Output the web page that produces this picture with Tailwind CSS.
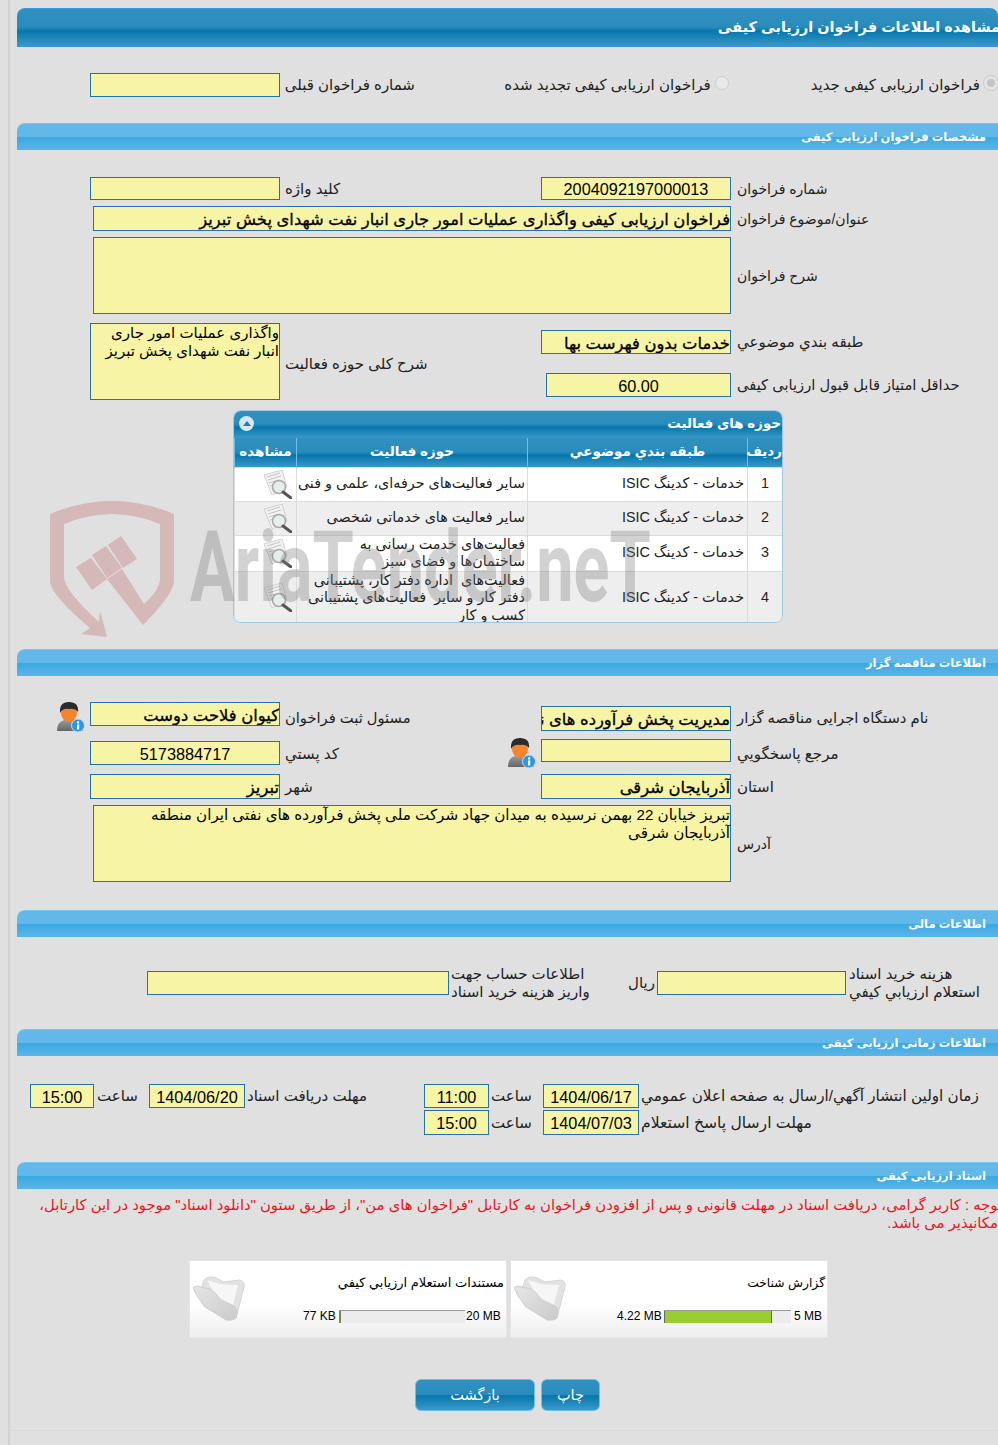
<!DOCTYPE html>
<html lang="fa">
<head>
<meta charset="utf-8">
<script src="https://cdn.jsdelivr.net/npm/@tailwindcss/browser@4"></script>
<title>مشاهده اطلاعات فراخوان ارزیابی کیفی</title>
</head>
<body class="m-0">
<div class="relative w-[998px] h-[1445px] overflow-hidden text-[15px] leading-[18px] text-[#222] font-['Liberation_Sans','DejaVu_Sans',sans-serif] bg-[linear-gradient(90deg,#e0e0e0_8px,#d3d3d3_8px,#d3d3d3_10px,#e0e0e0_10px)]">

<svg width="0" height="0" class="absolute"><defs>
  <linearGradient id="fold" x1="0" y1="0" x2="1" y2="1"><stop offset="0" stop-color="#e6e6e6"/><stop offset="1" stop-color="#cacaca"/></linearGradient>
  <linearGradient id="suit" x1="0" y1="0" x2="0" y2="1"><stop offset="0" stop-color="#9a9a9a"/><stop offset="1" stop-color="#666"/></linearGradient>
  <symbol id="folder" viewBox="0 0 52 46">
    <path d="M11 5 Q16 0 23 3 L31 7 L47 5 Q52 6 51 12 L43 43 L8 14Z" fill="#e2e2e2" stroke="#d4d4d4"/>
    <path d="M14 5 L27 9 L45 10 L40 30 L22 20Z" fill="#f6f6f6"/>
    <path d="M0 13 Q2 10 8 12 L17 14 Q23 17 28 26 L39 30 Q44 32 44 38 L43 43 Q40 46 33 45 Q22 38 12 32 Q4 22 0 13Z" fill="url(#fold)" stroke="#cdcdcd"/>
  </symbol>
  <symbol id="doc" viewBox="9 3 28 29">
    <path d="M9 8 27 3 32 20 17 28Z" fill="#f2f2f2" stroke="#cfcfcf"/>
    <path d="M12 10 25 6M13 13 26 9M14 16 20 14M15 19 19 18" stroke="#c4c4c4"/>
    <circle cx="24" cy="20" r="6.5" fill="#e4ecec" fill-opacity=".9" stroke="#a8a8a8" stroke-width="1.5"/>
    <path d="M28 25 36 31" stroke="#555" stroke-width="3" stroke-linecap="round"/>
  </symbol>
  <symbol id="user" viewBox="0 0 28 31">
    <path d="M0 29 Q0 20 7 18 H18 Q25 20 26 29Z" fill="url(#suit)"/>
    <ellipse cx="12" cy="11" rx="8" ry="9" fill="#f4852f"/>
    <path d="M3 11 Q2 0 12 0 Q22 0 21 10 Q18 6 12 7 Q6 6 3 11Z" fill="#2b2b2b"/>
    <circle cx="21" cy="23.500" r="6.500" fill="#2f97df" stroke="#bfe0f5"/>
    <rect x="20" y="22.500" width="2.200" height="5" fill="#fff"/>
    <rect x="20" y="19.300" width="2.200" height="2.200" fill="#fff"/>
  </symbol>
</defs></svg>

<!-- watermark -->
<svg class="absolute left-[50px] top-[500px] z-10 pointer-events-none" width="126" height="138" viewBox="50 500 126 138">
  <g fill="#c98f8f" fill-opacity=".5">
    <path d="M50 514 Q112 488 174 514 V583 Q170 598 143 625 L107 579 L122 569 L144 604 Q160 590 160 578 V524 Q112 504 64 524 V578 Q66 592 99 622 L100 611 L107 637 L81 634 L90 628 Q52 596 50 582 Z"/>
    <path d="M76 567 91 558 107 579 92 590Z"/>
    <path d="M92 555 106 546 122 568 107 578Z"/>
    <path d="M108 545 121 536 137 559 123 568Z"/>
  </g>
</svg>
<div class="absolute left-[190px] top-[513px] z-10 pointer-events-none origin-left scale-x-[.68] whitespace-nowrap text-[98px] leading-[110px] font-bold text-[#7d7d7d]/35 font-['Roboto',sans-serif]" dir="ltr">AriaTender.neT</div>

<!-- page title -->
<div class="mt-0 pt-[8px]">
  <div class="ml-[17px] h-[39px] pb-[2px] rounded-t-lg border-y border-[#3a95d8] bg-[linear-gradient(#3091c0_0,#2a8cbc_48%,#0677ad_60%,#3a98c8_100%)] flex justify-end items-center">
    <span dir="rtl" class="mr-[-2px] whitespace-nowrap text-[14.4px] font-bold text-white">مشاهده اطلاعات فراخوان ارزیابی کیفی</span>
  </div>
</div>

<!-- type row -->
<div class="mt-[26px] h-[24px] flex items-center">
  <div class="ml-[90px] w-[190px] h-[24px] border border-[#1f74ad] bg-[#f7f5a5]"></div>
  <span dir="rtl" class="ml-[5px] w-[220px] text-left">شماره فراخوان قبلی</span>
  <span dir="rtl" class="w-[207px] text-left whitespace-nowrap">فراخوان ارزیابی کیفی تجدید شده</span>
  <span class="ml-[4px] w-[14px] h-[14px] rounded-full border border-[#ccc] bg-[#e9e9e9] -translate-y-[2px]"></span>
  <span dir="rtl" class="ml-[84px] w-[167px] text-left whitespace-nowrap">فراخوان ارزیابی کیفی جدید</span>
  <span class="ml-[4px] shrink-0 w-[14px] h-[14px] rounded-full border-[3px] border-[#e4e4e4] bg-[#c4c4c4] outline outline-[#ccc] -translate-y-[2px]"></span>
</div>

<!-- section: spec -->
<div class="mt-[26px] ml-[17px] h-[27px] rounded-tl-lg border-t border-[#79c4ee] bg-[linear-gradient(#62b8e8_0,#62b8e8_48%,#3ba9e2_52%,#5ab5e8_100%)] flex justify-end items-center pr-[12px]">
  <span dir="rtl" class="text-[11.5px] font-bold text-white whitespace-nowrap">مشخصات فراخوان ارزیابی کیفی</span>
</div>

<div class="mt-[27px] h-[23px] flex items-center">
  <div class="ml-[90px] w-[190px] h-[23px] border border-[#1f74ad] bg-[#f7f5a5]"></div>
  <span dir="rtl" class="ml-[5px] w-[256px] text-left">کلید واژه</span>
  <div class="w-[190px] h-[23px] border border-[#1f74ad] bg-[#f7f5a5] text-center text-[16.3px] leading-[23px] text-black">2004092197000013</div>
  <span dir="rtl" class="ml-[6px] text-[14px]">شماره فراخوان</span>
</div>
<div class="mt-[6px] h-[25px] flex items-center">
  <div dir="rtl" class="ml-[93px] w-[638px] h-[25px] border border-[#1f74ad] bg-[#f7f5a5] text-[16.4px] leading-[25px] [-webkit-text-stroke:0.3px_black] text-black whitespace-nowrap overflow-hidden">فراخوان ارزیابی کیفی واگذاری عملیات امور جاری انبار نفت شهدای پخش تبریز</div>
  <span dir="rtl" class="ml-[6px] text-[14px]">عنوان/موضوع فراخوان</span>
</div>
<div class="mt-[6px] h-[77px] flex items-center">
  <div class="ml-[93px] w-[638px] h-[77px] border border-[#1f74ad] bg-[#f7f5a5]"></div>
  <span dir="rtl" class="ml-[6px] text-[14px]">شرح فراخوان</span>
</div>
<div class="mt-[9px] h-[77px] flex items-start">
  <div dir="rtl" class="ml-[90px] w-[190px] h-[77px] border border-[#1f74ad] bg-[#f7f5a5] text-[15px] text-black">واگذاری عملیات امور جاری<br>انبار نفت شهدای پخش تبریز</div>
  <span dir="rtl" class="ml-[5px] w-[256px] mt-[32px] text-left">شرح کلی حوزه فعالیت</span>
  <div class="flex flex-col">
    <div class="mt-[7px] h-[24px] flex items-center">
      <div dir="rtl" class="w-[190px] h-[24px] border border-[#1f74ad] bg-[#f7f5a5] text-[16.4px] leading-[24px] [-webkit-text-stroke:0.3px_black] text-black whitespace-nowrap overflow-hidden">خدمات بدون فهرست بها</div>
      <span dir="rtl" class="ml-[6px] whitespace-nowrap">طبقه بندي موضوعي</span>
    </div>
    <div class="mt-[19px] h-[24px] flex items-center">
      <div class="ml-[5px] w-[185px] h-[24px] border border-[#1f74ad] bg-[#f7f5a5] text-center text-[16.3px] leading-[24px] text-black">60.00</div>
      <span dir="rtl" class="ml-[6px] whitespace-nowrap text-[14.7px]">حداقل امتیاز قابل قبول ارزیابی کیفی</span>
    </div>
  </div>
</div>

<!-- activities table -->
<div class="mt-[10px] ml-[233px] w-[550px] h-[213px] rounded-lg border border-[#9cc9e6] overflow-hidden bg-white">
  <div dir="rtl" class="h-[27px] pb-[2px] flex items-center justify-between pr-[1px] pl-[5px] bg-[linear-gradient(#3091c0_0,#2a8cbc_48%,#0677ad_60%,#3a98c8_100%)] text-white font-bold text-[13.4px]">
    <span>حوزه های فعالیت</span>
    <span class="w-[15px] h-[15px] rounded-full bg-[#d6e6f2] flex items-center justify-center"><span class="w-0 h-0 border-x-[4px] border-x-transparent border-b-[5px] border-b-[#1f7fb3]"></span></span>
  </div>
  <table dir="rtl" class="w-[548px] table-fixed border-collapse text-[14.35px] leading-[17.5px]">
    <colgroup><col class="w-[35px]"><col class="w-[220px]"><col class="w-[231px]"><col class="w-[62px]"></colgroup>
    <thead>
      <tr class="h-[29px] text-white font-bold text-[13.5px] bg-[linear-gradient(#3091c0_0,#2a8cbc_48%,#0677ad_60%,#3a98c8_100%)]">
        <th class="p-0 pb-[2px] border-x border-[#6cc0ea] font-bold">ردیف</th>
        <th class="p-0 pb-[2px] border-x border-[#6cc0ea] font-bold">طبقه بندي موضوعي</th>
        <th class="p-0 pb-[2px] border-x border-[#6cc0ea] font-bold">حوزه فعالیت</th>
        <th class="p-0 pb-[2px] border-x border-[#6cc0ea] font-bold">مشاهده</th>
      </tr>
    </thead>
    <tbody>
      <tr class="h-[34px] bg-white border-t border-[#6cc0ea]">
        <td class="p-0 border border-[#dcdcdc] text-center">1</td>
        <td class="py-0 px-[3px] border border-[#dcdcdc]">خدمات - کدینگ ISIC</td>
        <td class="py-0 pr-[2px] pl-0 border border-[#dcdcdc] whitespace-nowrap">سایر فعالیت‌های حرفه‌ای، علمی و فنی</td>
        <td class="p-0 border border-[#dcdcdc]"><svg width="28" height="29" class="mr-[4px]"><use href="#doc"/></svg></td>
      </tr>
      <tr class="h-[34px] bg-[#eeeeee]">
        <td class="p-0 border border-[#dcdcdc] text-center">2</td>
        <td class="py-0 px-[3px] border border-[#dcdcdc]">خدمات - کدینگ ISIC</td>
        <td class="py-0 pr-[2px] pl-0 border border-[#dcdcdc] whitespace-nowrap">سایر فعالیت های خدماتی شخصی</td>
        <td class="p-0 border border-[#dcdcdc]"><svg width="28" height="29" class="mr-[4px]"><use href="#doc"/></svg></td>
      </tr>
      <tr class="h-[35px] bg-white">
        <td class="p-0 border border-[#dcdcdc] text-center">3</td>
        <td class="py-0 px-[3px] border border-[#dcdcdc]">خدمات - کدینگ ISIC</td>
        <td class="py-0 pr-[2px] pl-0 border border-[#dcdcdc] whitespace-nowrap">فعالیت‌های خدمت رسانی به<br>ساختمان‌ها و فضای سبز</td>
        <td class="p-0 border border-[#dcdcdc]"><svg width="28" height="29" class="mr-[4px]"><use href="#doc"/></svg></td>
      </tr>
      <tr class="h-[52px] bg-[#eeeeee]">
        <td class="p-0 border border-[#dcdcdc] text-center">4</td>
        <td class="py-0 px-[3px] border border-[#dcdcdc]">خدمات - کدینگ ISIC</td>
        <td class="py-0 pr-[2px] pl-0 border border-[#dcdcdc] whitespace-nowrap">فعالیت‌های&nbsp; اداره دفتر کار، پشتیبانی<br>دفتر کار و سایر&nbsp; فعالیت‌های پشتیبانی<br>کسب و کار</td>
        <td class="p-0 border border-[#dcdcdc]"><svg width="28" height="29" class="mr-[4px]"><use href="#doc"/></svg></td>
      </tr>
    </tbody>
  </table>
</div>

<!-- section: organiser -->
<div class="mt-[26px] ml-[17px] h-[27px] rounded-tl-lg border-t border-[#79c4ee] bg-[linear-gradient(#62b8e8_0,#62b8e8_48%,#3ba9e2_52%,#5ab5e8_100%)] flex justify-end items-center pr-[12px]">
  <span dir="rtl" class="text-[11.5px] font-bold text-white whitespace-nowrap">اطلاعات مناقصه گزار</span>
</div>

<div class="mt-[26px] h-[29px] flex items-start">
  <svg class="ml-[57px] mr-[5px] shrink-0" width="28" height="31"><use href="#user"/></svg>
  <div dir="rtl" class="w-[190px] h-[24px] border border-[#1f74ad] bg-[#f7f5a5] text-[16.4px] leading-[24px] [-webkit-text-stroke:0.3px_black] text-black whitespace-nowrap overflow-hidden">کیوان فلاحت دوست</div>
  <span dir="rtl" class="ml-[5px] w-[256px] mt-[7px] text-left text-[14.7px]">مسئول ثبت فراخوان</span>
  <div dir="rtl" class="mt-[4px] w-[190px] h-[25px] border border-[#1f74ad] bg-[#f7f5a5] text-[16.4px] leading-[25px] [-webkit-text-stroke:0.3px_black] text-black whitespace-nowrap overflow-hidden">مدیریت پخش فرآورده های نفتی آذربایجان شرقی</div>
  <span dir="rtl" class="ml-[6px] mt-[7px] whitespace-nowrap text-[14.8px]">نام دستگاه اجرایی مناقصه گزار</span>
</div>
<div class="mt-[7px] h-[30px] flex items-start">
  <div class="ml-[90px] mt-[3px] w-[190px] h-[24px] border border-[#1f74ad] bg-[#f7f5a5] text-center text-[16.3px] leading-[24px] text-black">5173884717</div>
  <span dir="rtl" class="ml-[5px] w-[223px] mt-[7px] text-left">کد پستي</span>
  <svg class="shrink-0" width="28" height="31"><use href="#user"/></svg>
  <div class="ml-[5px] mt-[1px] w-[190px] h-[23px] border border-[#1f74ad] bg-[#f7f5a5]"></div>
  <span dir="rtl" class="ml-[6px] mt-[7px] whitespace-nowrap">مرجع پاسخگويي</span>
</div>
<div class="mt-[6px] h-[25px] flex items-center">
  <div dir="rtl" class="ml-[90px] w-[190px] h-[25px] border border-[#1f74ad] bg-[#f7f5a5] text-[16.4px] leading-[25px] [-webkit-text-stroke:0.3px_black] text-black whitespace-nowrap overflow-hidden">تبریز</div>
  <span dir="rtl" class="ml-[5px] w-[256px] text-left">شهر</span>
  <div dir="rtl" class="w-[190px] h-[25px] border border-[#1f74ad] bg-[#f7f5a5] text-[16.4px] leading-[25px] [-webkit-text-stroke:0.3px_black] text-black whitespace-nowrap overflow-hidden">آذربایجان شرقی</div>
  <span dir="rtl" class="ml-[6px]">استان</span>
</div>
<div class="mt-[6px] h-[77px] flex items-center">
  <div dir="rtl" class="ml-[93px] w-[638px] h-[77px] border border-[#1f74ad] bg-[#f7f5a5] text-[15.15px] text-black">تبریز خیابان 22 بهمن نرسیده به میدان جهاد شرکت ملی پخش فرآورده های نفتی ایران منطقه<br>آذربایجان شرقی</div>
  <span dir="rtl" class="ml-[6px] text-[14px]">آدرس</span>
</div>

<!-- section: finance -->
<div class="mt-[28px] ml-[17px] h-[27px] rounded-tl-lg border-t border-[#79c4ee] bg-[linear-gradient(#62b8e8_0,#62b8e8_48%,#3ba9e2_52%,#5ab5e8_100%)] flex justify-end items-center pr-[12px]">
  <span dir="rtl" class="text-[11.5px] font-bold text-white whitespace-nowrap">اطلاعات مالی</span>
</div>
<div class="mt-[34px] h-[24px] flex items-center">
  <div class="ml-[147px] w-[302px] h-[24px] border border-[#1f74ad] bg-[#f7f5a5]"></div>
  <span dir="rtl" class="ml-[2px] w-[177px] text-left shrink-0">اطلاعات حساب جهت<br>واریز هزینه خرید اسناد</span>
  <span dir="rtl" class="w-[29px] text-left shrink-0">ریال</span>
  <div class="w-[189px] h-[24px] border border-[#1f74ad] bg-[#f7f5a5] shrink-0"></div>
  <span dir="rtl" class="ml-[3px] w-[140px] text-left shrink-0 whitespace-nowrap">هزینه خرید اسناد<br>استعلام ارزيابي كيفي</span>
</div>

<!-- section: timing -->
<div class="mt-[34px] ml-[17px] h-[27px] rounded-tl-lg border-t border-[#79c4ee] bg-[linear-gradient(#62b8e8_0,#62b8e8_48%,#3ba9e2_52%,#5ab5e8_100%)] flex justify-end items-center pr-[12px]">
  <span dir="rtl" class="text-[11.5px] font-bold text-white whitespace-nowrap">اطلاعات زمانی ارزیابی کیفی</span>
</div>
<div class="mt-[28px] h-[24px] flex items-center">
  <div class="ml-[30px] w-[64px] h-[24px] border border-[#1f74ad] bg-[#f7f5a5] text-center text-[16.3px] leading-[24px] text-black">15:00</div>
  <span dir="rtl" class="ml-[3px] w-[52px] text-left">ساعت</span>
  <div class="w-[96px] h-[24px] border border-[#1f74ad] bg-[#f7f5a5] text-center text-[16.3px] leading-[24px] text-black">1404/06/20</div>
  <span dir="rtl" class="ml-[2px] w-[177px] text-left whitespace-nowrap">مهلت دریافت اسناد</span>
  <div class="w-[65px] h-[24px] border border-[#1f74ad] bg-[#f7f5a5] text-center text-[16.3px] leading-[24px] text-black">11:00</div>
  <span dir="rtl" class="ml-[2px] w-[52px] text-left">ساعت</span>
  <div class="w-[96px] h-[24px] border border-[#1f74ad] bg-[#f7f5a5] text-center text-[16.3px] leading-[24px] text-black">1404/06/17</div>
  <span dir="rtl" class="ml-[2px] whitespace-nowrap text-[15.2px]">زمان اولین انتشار آگهي/ارسال به صفحه اعلان عمومي</span>
</div>
<div class="mt-[2px] h-[25px] flex items-center">
  <div class="ml-[424px] w-[65px] h-[25px] border border-[#1f74ad] bg-[#f7f5a5] text-center text-[16.3px] leading-[25px] text-black">15:00</div>
  <span dir="rtl" class="ml-[2px] w-[52px] text-left">ساعت</span>
  <div class="w-[96px] h-[25px] border border-[#1f74ad] bg-[#f7f5a5] text-center text-[16.3px] leading-[25px] text-black">1404/07/03</div>
  <span dir="rtl" class="ml-[2px] whitespace-nowrap text-[15.6px]">مهلت ارسال پاسخ استعلام</span>
</div>

<!-- section: documents -->
<div class="mt-[27px] ml-[17px] h-[27px] rounded-tl-lg border-t border-[#79c4ee] bg-[linear-gradient(#62b8e8_0,#62b8e8_48%,#3ba9e2_52%,#5ab5e8_100%)] flex justify-end items-center pr-[12px]">
  <span dir="rtl" class="text-[11.5px] font-bold text-white whitespace-nowrap">اسناد ارزیابی کیفی</span>
</div>
<p dir="rtl" class="mt-[7px] ml-[30px] w-[972px] whitespace-nowrap text-[14.8px] leading-[18px] text-[#e8141c]">توجه : کاربر گرامی، دریافت اسناد در مهلت قانونی و پس از افزودن فراخوان به کارتابل "فراخوان های من"، از طریق ستون "دانلود اسناد" موجود در این کارتابل،<br>امکانپذیر می باشد.</p>

<div class="mt-[28px] ml-[189px] flex gap-[3px]">
  <div class="w-[318px] h-[78px] bg-[linear-gradient(#ffffff_55%,#efefef_100%)] border border-[#e6e6e6] flex">
    <svg class="ml-[3px] mt-[14px] shrink-0 blur-[0.4px]" width="52" height="46"><use href="#folder"/></svg>
    <div class="flex-1 flex flex-col">
      <div dir="rtl" class="mt-[13px] pr-[2px] text-[13px] leading-[18px] text-black">مستندات استعلام ارزيابي كيفي</div>
      <div class="mt-[15px] ml-[58px] flex items-center text-[12px] text-black">
        <span class="w-[35px]">77 KB</span>
        <div class="ml-[1px] w-[126px] h-[13px] bg-[#ececec] border-t border-[#999]"><div class="w-[2px] h-full bg-[#7a8a4a]"></div></div>
        <span class="ml-[1px]">20 MB</span>
      </div>
    </div>
  </div>
  <div class="w-[318px] h-[78px] bg-[linear-gradient(#ffffff_55%,#efefef_100%)] border border-[#e6e6e6] flex">
    <svg class="ml-[3px] mt-[14px] shrink-0 blur-[0.4px]" width="52" height="46"><use href="#folder"/></svg>
    <div class="flex-1 flex flex-col">
      <div dir="rtl" class="mt-[13px] pr-[2px] text-[12.3px] leading-[18px] text-black">گزارش شناخت</div>
      <div class="mt-[15px] ml-[51px] flex items-center text-[12px] text-black">
        <span class="w-[47px]">4.22 MB</span>
        <div class="w-[127px] h-[13px] bg-[#ececec] border-t border-[#999]"><div class="w-[108px] h-full bg-[#9acd32] border-x border-[#666]"></div></div>
        <span class="ml-[3px]">5 MB</span>
      </div>
    </div>
  </div>
</div>

<div class="mt-[41px] ml-[415px] flex gap-[6px]">
  <button class="w-[120px] h-[32px] rounded-md border border-[#6cc0ea] bg-[linear-gradient(#3091c0_0,#2a8cbc_48%,#0677ad_52%,#3a98c8_100%)] text-white text-[14.5px]">بازگشت</button>
  <button class="w-[59px] h-[32px] rounded-md border border-[#6cc0ea] bg-[linear-gradient(#3091c0_0,#2a8cbc_48%,#0677ad_52%,#3a98c8_100%)] text-white text-[14.5px]">چاپ</button>
</div>
<div class="mt-[19px] ml-[10px] border-t border-[#d8d8d8]"></div>
</div>
</body>
</html>
